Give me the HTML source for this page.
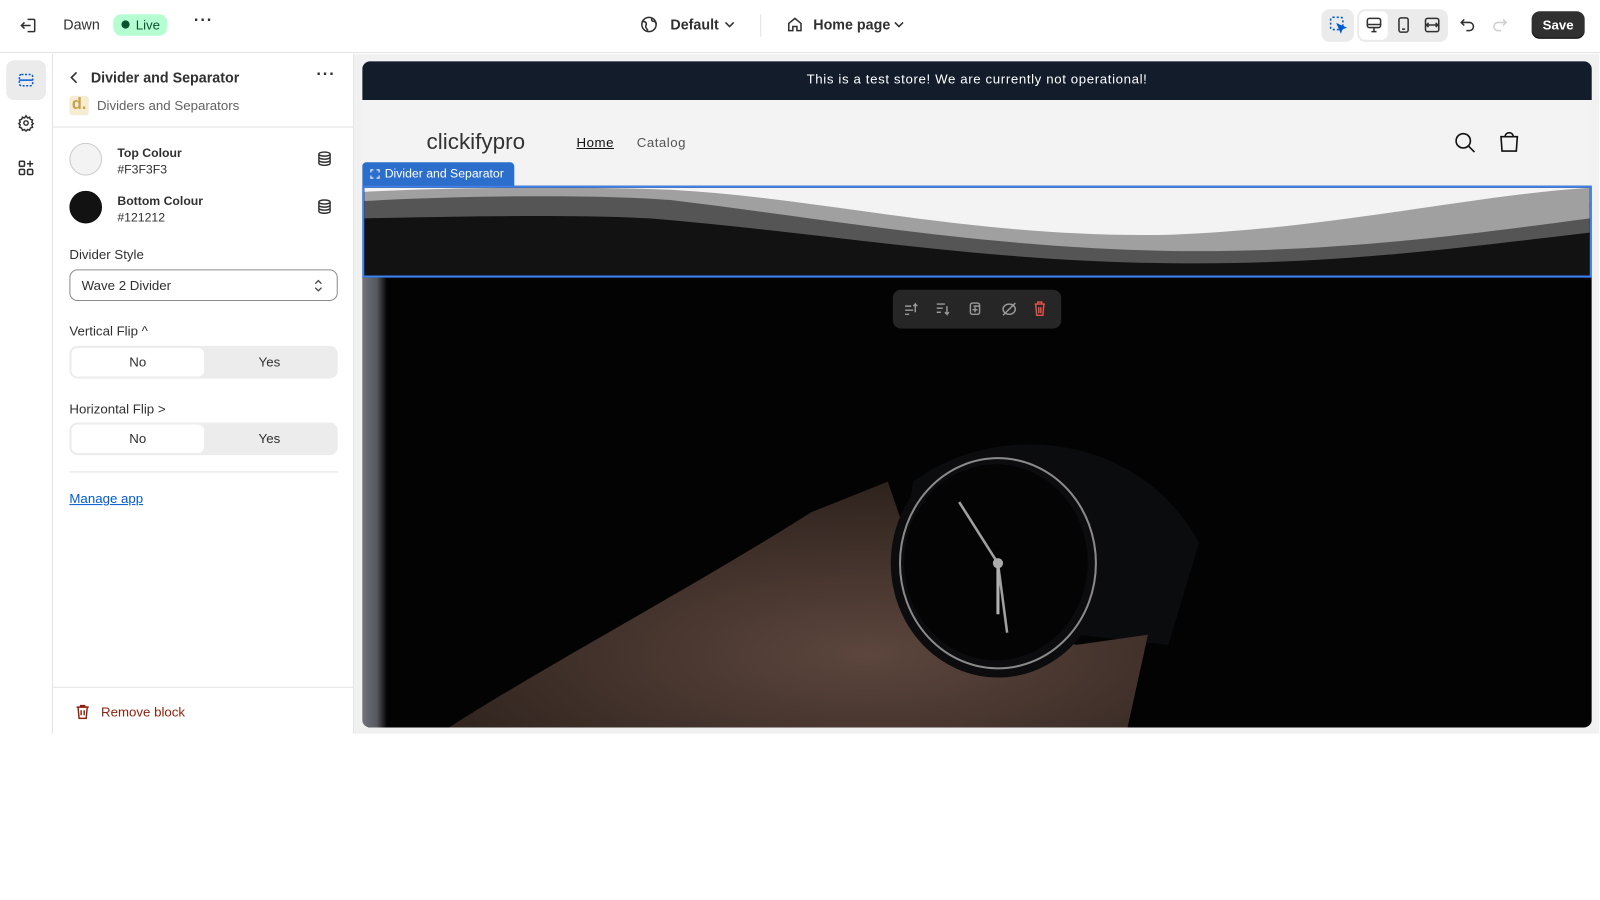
<!DOCTYPE html>
<html><head><meta charset="utf-8"><style>
*{box-sizing:border-box;margin:0;padding:0}
body{width:1600px;height:900px;background:#fff;font-family:"Liberation Sans",sans-serif;color:#303030;position:relative;overflow:hidden}
#w{position:absolute;left:0;top:0;width:1568px;height:882px;transform:scale(1.0204);transform-origin:0 0}
.abs{position:absolute}
.top{left:0;top:0;width:1568px;height:52px;border-bottom:1px solid #e3e3e3;background:#fff}
.t13{font-size:13px}
.rail{left:0;top:53px;width:52px;height:666px;border-right:1px solid #e3e3e3;background:#fff}
.panel{left:52px;top:53px;width:295px;height:666px;border-right:1px solid #e3e3e3;background:#fff}
.canvas{left:347px;top:53px;width:1220px;height:666px;background:#f1f1f1}
.seg{left:16px;width:263px;height:32px;background:#ececec;border-radius:8px}
.seg div{position:absolute;top:2px;height:28px;width:130px;text-align:center;line-height:28px;font-size:13px;color:#303030;border-radius:6px}
</style></head><body><div id="w">
<div class="abs top">
 <svg class="abs" style="left:18px;top:15px" width="20" height="20" viewBox="0 0 20 20" fill="none" stroke="#303030" stroke-width="1.5"><path d="M9 4h6a1 1 0 0 1 1 1v10a1 1 0 0 1-1 1H9"/><path d="M12 10H3M6 7l-3 3 3 3"/></svg>
 <div class="abs t13" style="left:62px;top:16px;font-size:14px">Dawn</div>
 <div class="abs" style="left:111px;top:14px;width:53px;height:21px;background:#b4fed2;border-radius:8px;font-size:13px;color:#0c5132;line-height:21px;padding-left:22px">Live<span class="abs" style="left:8px;top:6px;width:8px;height:8px;border-radius:50%;background:#0c5132"></span></div>
 <div class="abs" style="left:190px;top:12px;font-size:16px;font-weight:bold;letter-spacing:1px">···</div>
 <svg class="abs" style="left:627px;top:15px" width="18" height="18" viewBox="0 0 18 18" fill="none" stroke="#303030" stroke-width="1.5"><circle cx="9" cy="9" r="7"/><path d="M3 6c3 0 4 2 3 4s1 3 2 5M12 3c-1 2 0 3 2 3s2 2 2 3"/></svg>
 <div class="abs" style="left:657px;top:16px;font-size:14px;font-weight:bold">Default</div>
 <svg class="abs" style="left:709px;top:19px" width="12" height="10" viewBox="0 0 12 10" fill="none" stroke="#303030" stroke-width="1.5"><path d="M2 3l4 4 4-4"/></svg>
 <div class="abs" style="left:745px;top:14px;width:1px;height:22px;background:#e3e3e3"></div>
 <svg class="abs" style="left:770px;top:15px" width="18" height="18" viewBox="0 0 18 18" fill="none" stroke="#303030" stroke-width="1.5"><path d="M3 8l6-5 6 5v7H11v-4H7v4H3z"/></svg>
 <div class="abs" style="left:797px;top:16px;font-size:14px;font-weight:bold">Home page</div>
 <svg class="abs" style="left:875px;top:19px" width="12" height="10" viewBox="0 0 12 10" fill="none" stroke="#303030" stroke-width="1.5"><path d="M2 3l4 4 4-4"/></svg>
 <div class="abs" style="left:1295px;top:9px;width:32px;height:32px;background:#ebebeb;border-radius:8px"></div>
 <svg class="abs" style="left:1303px;top:16px" width="17" height="17" viewBox="0 0 17 17" fill="none" stroke="#005bd3" stroke-width="1.6" stroke-dasharray="2 2"><rect x="1" y="1" width="12" height="12" rx="2"/><path d="M8 8l7 3-3 1-1 3z" fill="#005bd3" stroke-dasharray="0"/></svg>
 <div class="abs" style="left:1330px;top:9px;width:89px;height:32px;background:#ebebeb;border-radius:8px"></div>
 <div class="abs" style="left:1332px;top:11px;width:28px;height:28px;background:#fff;border-radius:6px"></div>
 <svg class="abs" style="left:1338px;top:16px" width="17" height="17" viewBox="0 0 17 17" fill="none" stroke="#303030" stroke-width="1.5"><rect x="2" y="2" width="13" height="9" rx="2"/><path d="M2 8h13M6 15h5M8.5 11v4"/></svg>
 <svg class="abs" style="left:1367px;top:16px" width="17" height="17" viewBox="0 0 17 17" fill="none" stroke="#303030" stroke-width="1.5"><rect x="4" y="1.5" width="9" height="14" rx="2"/><path d="M7 12.5h3"/></svg>
 <svg class="abs" style="left:1395px;top:16px" width="17" height="17" viewBox="0 0 17 17" fill="none" stroke="#303030" stroke-width="1.5"><rect x="2" y="2" width="13" height="13" rx="2"/><path d="M2 8.5h13M5 6.5l-2 2 2 2M12 6.5l2 2-2 2"/></svg>
 <svg class="abs" style="left:1430px;top:16px" width="17" height="17" viewBox="0 0 17 17" fill="none" stroke="#303030" stroke-width="1.5"><path d="M5 3L2 6l3 3M2 6h8a4 4 0 0 1 0 8H7"/></svg>
 <svg class="abs" style="left:1461px;top:16px" width="17" height="17" viewBox="0 0 17 17" fill="none" stroke="#cfcfcf" stroke-width="1.5"><path d="M12 3l3 3-3 3M15 6H7a4 4 0 0 0 0 8h3"/></svg>
 <div class="abs" style="left:1501px;top:11px;width:52px;height:27px;background:#303030;border-radius:8px;color:#fff;font-size:13px;font-weight:bold;text-align:center;line-height:27px;box-shadow:inset 0 -1px 0 #000">Save</div>
</div>
<div class="abs rail">
 <div class="abs" style="left:6px;top:6px;width:39px;height:39px;background:#ebebeb;border-radius:8px"></div>
 <svg class="abs" style="left:17px;top:17px" width="17" height="17" viewBox="0 0 17 17" fill="none" stroke="#005bd3" stroke-width="1.5"><rect x="2" y="3" width="13" height="11" rx="2" stroke-dasharray="2 1.5"/><path d="M2 8.5h13"/></svg>
 <svg class="abs" style="left:17px;top:59px" width="17" height="17" viewBox="0 0 24 24" fill="none" stroke="#303030" stroke-width="2"><circle cx="12" cy="12" r="3"/><path d="M12 2l2 3 3-1 1 3 3 1-1 3 2 2-2 2 1 3-3 1-1 3-3-1-2 3-2-3-3 1-1-3-3-1 1-3-2-2 2-2-1-3 3-1 1-3 3 1z"/></svg>
 <svg class="abs" style="left:17px;top:103px" width="17" height="17" viewBox="0 0 17 17" fill="none" stroke="#303030" stroke-width="1.5"><rect x="2" y="2" width="5" height="5" rx="1"/><rect x="2" y="10" width="5" height="5" rx="1"/><rect x="10" y="10" width="5" height="5" rx="1"/><path d="M12.5 1.5v6M9.5 4.5h6"/></svg>
</div>
<div class="abs panel">
 <svg class="abs" style="left:14px;top:16px" width="14" height="14" viewBox="0 0 14 14" fill="none" stroke="#303030" stroke-width="1.6"><path d="M9 2L4 7l5 5"/></svg>
 <div class="abs" style="left:37px;top:15px;font-size:14px;font-weight:bold">Divider and Separator</div>
 <div class="abs" style="left:258px;top:12px;font-size:16px;font-weight:bold;letter-spacing:1px">···</div>
 <div class="abs" style="left:16px;top:41px;width:19px;height:19px;background:#f6ecd2;border-radius:3px;color:#c8a24a;font-size:16px;font-weight:bold;line-height:18px;text-align:center">d.</div>
 <div class="abs" style="left:43px;top:43px;font-size:13px;color:#616161">Dividers and Separators</div>
 <div class="abs" style="left:0;top:71px;width:294px;height:1px;background:#e3e3e3"></div>
 <div class="abs" style="left:16px;top:87px;width:32px;height:32px;border-radius:50%;background:#f3f3f3;border:1px solid #ccc"></div>
 <div class="abs" style="left:63px;top:90px;font-size:12px;font-weight:bold">Top Colour</div>
 <div class="abs" style="left:63px;top:106px;font-size:12px">#F3F3F3</div>
 <div class="abs" style="left:16px;top:134px;width:32px;height:32px;border-radius:50%;background:#121212"></div>
 <div class="abs" style="left:63px;top:137px;font-size:12px;font-weight:bold">Bottom Colour</div>
 <div class="abs" style="left:63px;top:153px;font-size:12px">#121212</div>
 <svg class="abs" style="left:259px;top:95px" width="14" height="15" viewBox="0 0 14 15" fill="none" stroke="#303030" stroke-width="1.4"><ellipse cx="7" cy="3" rx="5.5" ry="2"/><path d="M1.5 3v9c0 1.1 2.5 2 5.5 2s5.5-.9 5.5-2V3M1.5 6c0 1.1 2.5 2 5.5 2s5.5-.9 5.5-2M1.5 9c0 1.1 2.5 2 5.5 2s5.5-.9 5.5-2"/></svg>
 <svg class="abs" style="left:259px;top:142px" width="14" height="15" viewBox="0 0 14 15" fill="none" stroke="#303030" stroke-width="1.4"><ellipse cx="7" cy="3" rx="5.5" ry="2"/><path d="M1.5 3v9c0 1.1 2.5 2 5.5 2s5.5-.9 5.5-2V3M1.5 6c0 1.1 2.5 2 5.5 2s5.5-.9 5.5-2M1.5 9c0 1.1 2.5 2 5.5 2s5.5-.9 5.5-2"/></svg>
 <div class="abs" style="left:16px;top:189px;font-size:13px">Divider Style</div>
 <div class="abs" style="left:16px;top:211px;width:263px;height:31px;border:1px solid #8a8a8a;border-radius:8px;font-size:13px;line-height:29px;padding-left:11px">Wave 2 Divider</div>
 <svg class="abs" style="left:254px;top:219px" width="12" height="16" viewBox="0 0 12 16" fill="none" stroke="#4a4a4a" stroke-width="1.3"><path d="M3 6l3-3 3 3M3 10l3 3 3-3"/></svg>
 <div class="abs" style="left:16px;top:264px;font-size:13px">Vertical Flip ^</div>
 <div class="abs seg" style="top:286px"><div style="left:2px;background:#fff">No</div><div style="left:131px">Yes</div></div>
 <div class="abs" style="left:16px;top:340px;font-size:13px">Horizontal Flip &gt;</div>
 <div class="abs seg" style="top:361px"><div style="left:2px;background:#fff">No</div><div style="left:131px">Yes</div></div>
 <div class="abs" style="left:16px;top:409px;width:263px;height:1px;background:#e3e3e3"></div>
 <div class="abs" style="left:16px;top:428px;font-size:13px;color:#005bd3;text-decoration:underline">Manage app</div>
 <div class="abs" style="left:0;top:620px;width:294px;height:1px;background:#e3e3e3"></div>
 <svg class="abs" style="left:22px;top:637px" width="14" height="15" viewBox="0 0 14 15" fill="none" stroke="#8e1f0b" stroke-width="1.4"><path d="M1 3h12M5 3V1.5h4V3M2.5 3l1 11h7l1-11M5.5 6v5M8.5 6v5"/></svg>
 <div class="abs" style="left:47px;top:637px;font-size:13px;color:#8e1f0b">Remove block</div>
</div>
<div class="abs canvas"></div>
<div class="abs" style="left:355px;top:60px;width:1205px;height:653px;background:#f3f3f3;border-radius:8px;overflow:hidden">
 <div class="abs" style="left:0;top:0;width:1205px;height:38px;background:#121c2a;color:#fff;font-size:13px;text-align:center;line-height:36px;letter-spacing:0.6px">This is a test store! We are currently not operational!</div>
 <div class="abs" style="left:63px;top:66px;font-size:22px;color:#333">clickifypro</div>
 <div class="abs" style="left:210px;top:72px;font-size:13px;color:#121212;text-decoration:underline;letter-spacing:.5px">Home</div>
 <div class="abs" style="left:269px;top:72px;font-size:13px;color:#555;letter-spacing:.5px">Catalog</div>
 <svg class="abs" style="left:1070px;top:69px" width="22" height="22" viewBox="0 0 22 22" fill="none" stroke="#121212" stroke-width="1.6"><circle cx="9" cy="9" r="7"/><path d="M14 14l6 6"/></svg>
 <svg class="abs" style="left:1113px;top:68px" width="22" height="22" viewBox="0 0 22 22" fill="none" stroke="#121212" stroke-width="1.6"><path d="M3 6h16l-1 14H4zM7 6a4 4 0 0 1 8 0"/></svg>
 <svg class="abs" style="left:0;top:212px" width="1205" height="441" viewBox="0 0 1205 441" preserveAspectRatio="none">
  <defs><radialGradient id="sk" cx="0.6" cy="0.7" r="0.7"><stop offset="0" stop-color="#5c463d"/><stop offset="1" stop-color="#2e221d"/></radialGradient>
  <linearGradient id="lg" x1="0" x2="1"><stop offset="0" stop-color="#70747a"/><stop offset="0.6" stop-color="#55585d"/><stop offset="1" stop-color="#050506"/></linearGradient></defs>
  <rect width="1205" height="441" fill="#030304"/>
  <rect x="0" width="24" height="441" fill="url(#lg)"/>
  <path d="M540 200 C620 140 760 150 820 260 L790 360 L520 330 Z" fill="#0b0c0e"/>
  <path d="M85 441 C180 380 330 300 440 230 L515 200 L560 330 L700 360 L770 350 L750 441 Z" fill="url(#sk)"/>
  <ellipse cx="623" cy="280" rx="105" ry="112" fill="#0c0c0e"/>
  <ellipse cx="623" cy="280" rx="96" ry="103" fill="none" stroke="#8a8a8a" stroke-width="2"/>
  <ellipse cx="621" cy="279" rx="90" ry="96" fill="#040405"/>
  <path d="M585 220 L623 280 L632 348" stroke="#a0a0a0" stroke-width="2.5" fill="none"/>
  <path d="M623 280 L623 330" stroke="#b0b0b0" stroke-width="3"/>
  <circle cx="623" cy="280" r="5" fill="#aaa"/>
 </svg>
 <div class="abs" style="left:0;top:122px;width:1205px;height:90px;border:2px solid #3b82f6;background:#121212;overflow:hidden">
  <svg class="abs" style="left:0;top:0" width="1201" height="86" viewBox="0 0 1201 86" preserveAspectRatio="none">
   <rect width="1201" height="86" fill="#121212"/>
   <path d="M0 30 C100 28 200 26 280 30 C450 44 600 72 790 74 C950 76 1080 58 1201 44 V0 H0 Z" fill="#555"/>
   <path d="M0 13 C90 8 220 6 300 12 C450 30 600 58 790 62 C950 64 1080 46 1201 30 V0 H0 Z" fill="#a0a0a0"/>
   <path d="M0 0 H1201 V14 C1080 30 950 58 790 58 C600 56 450 22 300 8 C200 2 80 4 0 8 Z" fill="#a0a0a0"/>
   <path d="M0 0 H1201 V0 C1080 8 950 40 790 46 C600 50 450 10 300 2 C200 -2 80 0 0 4 Z" fill="#f3f3f3"/>
  </svg>
 </div>
 <div class="abs" style="left:0;top:99px;width:149px;height:23px;background:#2c6ecb;border-radius:4px 4px 0 0;color:#fff;font-size:12px;line-height:23px;padding-left:22px">Divider and Separator<span class="abs" style="left:8px;top:7px;width:9px;height:9px;border:1px dashed #fff"></span></div>
 <div class="abs" style="left:520px;top:224px;width:165px;height:38px;background:#262626;border-radius:8px"></div>
 <svg class="abs" style="left:530px;top:234px" width="150" height="18" viewBox="0 0 150 18" fill="none" stroke="#9a9a9a" stroke-width="1.4">
  <path d="M2 6h6M2 10h8M2 14h4M12 12V4l-2 2M12 4l2 2"/>
  <path d="M33 4h8M33 8h6M33 12h4M43 6v8l-2-2M43 14l2-2"/>
  <rect x="66" y="3" width="9" height="11" rx="2"/><path d="M69 6h6M70.5 7v5M68 9.5h5"/>
  <ellipse cx="104" cy="9" rx="6" ry="5"/><path d="M98 15l12-12"/>
  <path d="M129 4h10M132 4V2h4v2M130 4l1 11h6l1-11M133 7v6M135 7v6" stroke="#e5544b"/>
 </svg>
</div>
</div></body></html>
